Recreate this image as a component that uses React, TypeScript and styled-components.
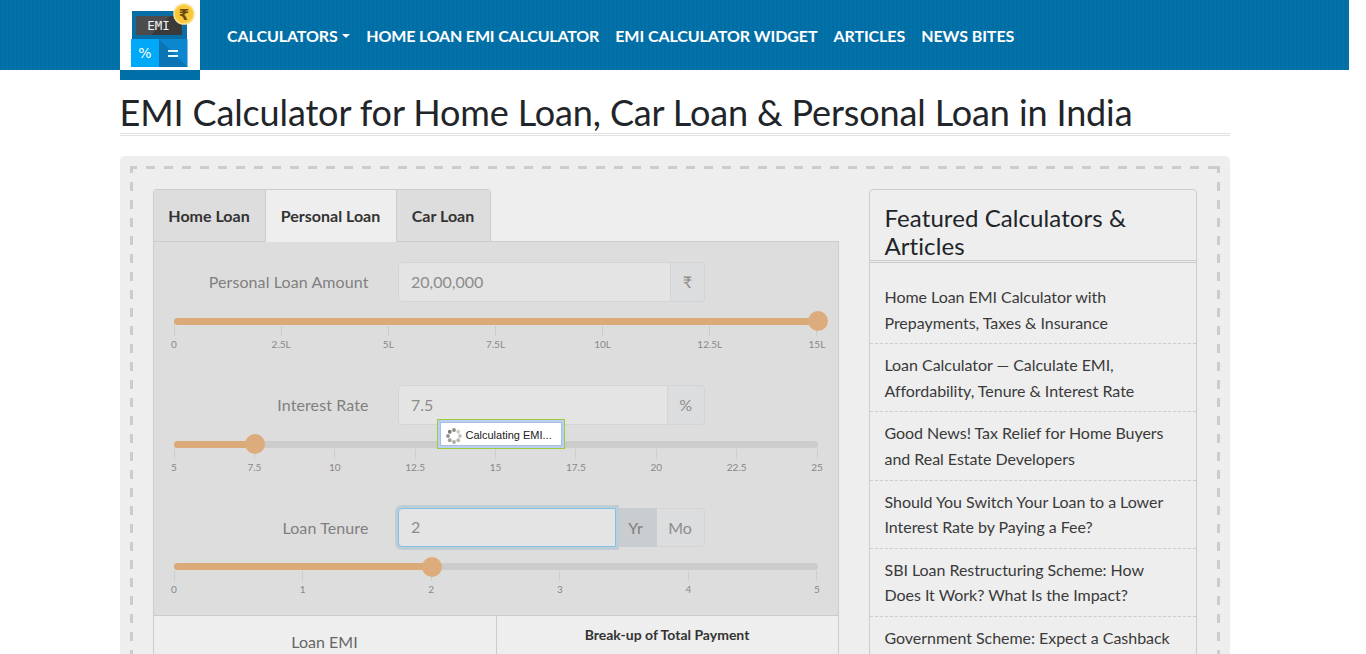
import React from "react";
import styled, { createGlobalStyle } from "styled-components";

const Global = createGlobalStyle`
  html, body { margin: 0; padding: 0; background: #fff; overflow: hidden; }
  * { box-sizing: border-box; }
  body { font-family: "Lato", "Liberation Sans", sans-serif; font-size: 16px; line-height: 1.6; color: #212529; }
`;

const Page = styled.div`
  width: 1349px;
  height: 654px;
  overflow: hidden;
`;
const Header = styled.header`
  height: 70px;
  background-color: #006fa8;
  background-image: repeating-linear-gradient(90deg, rgba(0,0,0,0.015) 0 2px, rgba(255,255,255,0.015) 2px 4px);
`;
const Container = styled.div`
  width: 1110px;
  margin: 0 auto;
`;
const HeaderInner = styled(Container)`
  display: flex;
  height: 70px;
`;
const LogoBox = styled.a`
  display: block;
  width: 80px;
  height: 80px;
  flex: none;
  background: linear-gradient(#fff 0 70px, #006fa8 70px);
`;
const Nav = styled.nav`
  display: flex;
  align-items: center;
  padding: 2px 0 0 19.5px;
`;
const NavLink = styled.a<{ $tight?: boolean }>`
  display: flex;
  align-items: center;
  padding: 0 8px;
  color: #fff;
  font-weight: 700;
  font-size: 16px;
  letter-spacing: ${(p) => (p.$tight ? "-0.17px" : "-0.07px")};
  text-transform: uppercase;
  white-space: nowrap;
`;
const Caret = styled.span`
  width: 0;
  height: 0;
  margin-left: 4.5px;
  border-top: 4.5px solid #fff;
  border-left: 4.5px solid transparent;
  border-right: 4.5px solid transparent;
`;
const Title = styled.h1`
  margin: 19px 0 20px;
  padding-bottom: 0;
  font-size: 36px;
  font-weight: 400;
  line-height: 46px;
  letter-spacing: -0.13px;
  color: #212529;
  border-bottom: 3px double #e2e2e2;
  height: 47px;
`;
const Panel = styled.section`
  background: #eee;
  border-radius: 5px;
  padding: 10px;
`;
const DashedFrame = styled.div`
  display: flex;
  gap: 30px;
  padding: 23px;
  background-image:
    linear-gradient(90deg, #ccc 9px, transparent 9px),
    linear-gradient(90deg, #ccc 9px, transparent 9px),
    linear-gradient(#ccc 9px, transparent 9px),
    linear-gradient(#ccc 9px, transparent 9px);
  background-size: 18px 3px, 18px 3px, 3px 18px, 3px 18px;
  background-position: -2px 0, -2px 100%, 0 -2px, 100% -2px;
  background-repeat: repeat-x, repeat-x, repeat-y, repeat-y;
`;
const Calculator = styled.div`
  width: 686px;
  flex: none;
`;
const Tabs = styled.div`
  display: flex;
  width: 338px;
  height: 53px;
  border: 1px solid #ccc;
  border-bottom: 0;
  border-radius: 4px 4px 0 0;
  position: relative;
  z-index: 1;
  margin-bottom: -1px;
`;
const Tab = styled.a<{ $active?: boolean; $width: number }>`
  display: flex;
  align-items: center;
  justify-content: center;
  width: ${(p) => p.$width}px;
  height: ${(p) => (p.$active ? "52px" : "51px")};
  font-weight: 700;
  font-size: 16px;
  color: #333;
  background: ${(p) => (p.$active ? "#eee" : "#ddd")};
  border-left: ${(p) => (p.$active ? "1px solid #ccc" : "0")};
  border-right: ${(p) => (p.$active ? "1px solid #ccc" : "0")};
`;
const TabPane = styled.div`
  background: #ddd;
  border: 1px solid #ccc;
  border-bottom: 0;
  position: relative;
`;
const Fields = styled.div`
  padding: 20.3px 20px 18.6px;
`;
const Row = styled.div`
  margin-bottom: 34px;
  &:last-child { margin-bottom: 0; }
`;
const FieldLine = styled.div`
  display: flex;
  align-items: center;
  height: 39.6px;
  margin-bottom: 16.1px;
`;
const FieldLabel = styled.label`
  width: 195px;
  margin-right: 29px;
  text-align: right;
  color: #808080;
  font-size: 16px;
  letter-spacing: 0.1px;
`;
const InputGroup = styled.div`
  display: flex;
  width: 307px;
  height: 39.6px;
`;
const FieldInput = styled.input<{ $focused?: boolean }>`
  flex: 1;
  min-width: 0;
  height: 100%;
  padding: 5.5px 12px 6.5px 12.5px;
  font: 400 16px "Lato", sans-serif;
  color: #8c8c8c;
  background: #e4e4e4;
  border: 1px solid ${(p) => (p.$focused ? "#80c2e6" : "#d2d4d6")};
  border-radius: 4px 0 0 4px;
  outline: none;
  position: relative;
  z-index: ${(p) => (p.$focused ? 2 : 0)};
  box-shadow: ${(p) => (p.$focused ? "0 0 0 3px #bfcdd5" : "none")};
`;
const Addon = styled.span<{ $active?: boolean; $last?: boolean }>`
  display: flex;
  align-items: center;
  justify-content: center;
  padding: 0 11.5px;
  color: ${(p) => (p.$active ? "#7e7e7e" : "#8c8c8c")};
  font-size: 16px;
  background: ${(p) => (p.$active ? "#c9cdd0" : "#dcdddf")};
  border: 1px solid ${(p) => (p.$active ? "#c9cdd0" : "#d2d4d6")};
  border-left: 0;
  border-radius: ${(p) => (p.$last ? "0 4px 4px 0" : "0")};
`;
const TenureAddon = styled(Addon)`
  padding: 0;
  width: ${(p) => (p.$last ? "48px" : "41px")};
`;
const Slider = styled.div`
  position: relative;
  height: 7px;
  background: #ccc;
  border-radius: 4px;
`;
const SliderFill = styled.div<{ $pct: number }>`
  height: 7px;
  width: ${(p) => p.$pct}%;
  background: #dbaa79;
  border-radius: 4px 0 0 4px;
`;
const Handle = styled.span<{ $pct: number }>`
  position: absolute;
  top: -6.5px;
  left: ${(p) => p.$pct}%;
  width: 20px;
  height: 20px;
  margin-left: -9.5px;
  border-radius: 50%;
  background: #dcac7c;
`;
const Scale = styled.div`
  display: flex;
  justify-content: space-between;
  height: 26px;
  padding-top: 1px;
`;
const Tick = styled.div`
  display: flex;
  flex-direction: column;
  align-items: center;
  width: 1px;
`;
const TickLine = styled.span`
  display: block;
  flex: none;
  width: 1px;
  height: 10px;
  background: #ccc;
`;
const TickLabel = styled.span`
  font-size: 10px;
  line-height: 16px;
  color: #888;
  white-space: nowrap;
`;
const Results = styled.div`
  display: grid;
  grid-template-columns: 342px 1fr;
  background: #eee;
  border-top: 1px solid #ccc;
  height: 120px;
`;
const ResultCell = styled.div`
  padding-top: 13px;
  text-align: center;
  color: #666;
  font-size: 16px;
  & + & { border-left: 1px solid #ccc; }
`;
const BreakupHead = styled.div`
  margin-top: -5px;
  text-align: center;
  font-size: 14px;
  font-weight: 700;
  color: #333;
`;
const Loader = styled.div`
  position: absolute;
  left: 283px;
  top: 177px;
  width: 128px;
  height: 30px;
  border: 1px solid #9ccc3c;
  background: #fff;
  box-shadow: inset 0 0 0 2px #b9d0f0, inset 0 0 0 3px #a8bde0;
  display: flex;
  align-items: center;
  padding: 3px 0 0 8px;
  gap: 4px;
  z-index: 3;
  font-family: "Liberation Sans", sans-serif;
  font-size: 11px;
  color: #222;
  white-space: nowrap;
`;
const Sidebar = styled.aside`
  width: 328px;
  flex: none;
  height: 600px;
  border: 1px solid #ccc;
  border-radius: 4px;
`;
const SideHead = styled.h3`
  margin: 0;
  padding: 13.5px 15px 0;
  height: 73px;
  font-size: 24px;
  font-weight: 400;
  line-height: 28.8px;
  letter-spacing: 0.08px;
  color: #212529;
  border-bottom: 3px double #ccc;
`;
const SideList = styled.ul`
  list-style: none;
  margin: 0;
  padding: 13px 0 0;
`;
const SideItem = styled.li`
  padding: 8px 15px;
  font-size: 16px;
  line-height: 25.6px;
  letter-spacing: -0.04px;
  color: #3a3a3a;
  border-bottom: 1px dashed #ccc;
`;

const Logo = () => (
  <svg width="80" height="70" viewBox="0 0 80 70" style={{ display: "block" }}>
    <rect x="12" y="11" width="55" height="29" fill="#0a6ea6" />
    <rect x="16" y="16" width="46" height="19" fill="#3a3a3a" />
    <path d="M16 16H50L31 35H16Z" fill="#4c4c4c" />
    <text x="38.5" y="29.5" textAnchor="middle" fill="#f2f2f2" fontFamily="DejaVu Sans Mono, monospace" fontSize="12.5">EMI</text>
    <rect x="11" y="39" width="28" height="28" fill="#00a9f7" />
    <rect x="39" y="39" width="28.5" height="28" fill="#0c86cf" />
    <path d="M39 39L67.5 67H39Z" fill="#0a74b4" />
    <text x="25" y="58" textAnchor="middle" fill="#fff" fontFamily="DejaVu Sans, sans-serif" fontSize="14">%</text>
    <rect x="48" y="50" width="10" height="2" fill="#e8f6ff" />
    <rect x="48" y="55" width="10" height="2" fill="#e8f6ff" />
    <circle cx="64" cy="14" r="10.8" fill="#fce39a" />
    <circle cx="64" cy="14" r="9.3" fill="#f9c93a" />
    <text x="64" y="19.5" textAnchor="middle" fill="#6b4a10" fontFamily="DejaVu Sans, sans-serif" fontWeight="700" fontSize="15">₹</text>
  </svg>
);

const Spinner = () => {
  const shades = ["#8d8d80", "#cfcfc4", "#c4c4b8", "#b8b8ac", "#acaca0", "#a0a094", "#949488", "#7d7d70"];
  return (
    <svg width="16" height="16" viewBox="0 0 16 16">
      {shades.map((c, i) => {
        const a = (i * Math.PI) / 4 - Math.PI / 2;
        return <circle key={i} cx={8 + 6 * Math.cos(a)} cy={8 + 6 * Math.sin(a)} r="1.9" fill={c} />;
      })}
    </svg>
  );
};

const Ticks = ({ labels }: { labels: string[] }) => (
  <Scale>
    {labels.map((l) => (
      <Tick key={l}>
        <TickLine />
        <TickLabel>{l}</TickLabel>
      </Tick>
    ))}
  </Scale>
);

const items = [
  "Home Loan EMI Calculator with Prepayments, Taxes & Insurance",
  "Loan Calculator — Calculate EMI, Affordability, Tenure & Interest Rate",
  "Good News! Tax Relief for Home Buyers and Real Estate Developers",
  "Should You Switch Your Loan to a Lower Interest Rate by Paying a Fee?",
  "SBI Loan Restructuring Scheme: How Does It Work? What Is the Impact?",
  "Government Scheme: Expect a Cashback",
];

export default function App() {
  return (
    <Page>
      <Global />
      <Header>
        <HeaderInner>
          <LogoBox><Logo /></LogoBox>
          <Nav>
            <NavLink>Calculators<Caret /></NavLink>
            <NavLink $tight>Home Loan EMI Calculator</NavLink>
            <NavLink>EMI Calculator Widget</NavLink>
            <NavLink>Articles</NavLink>
            <NavLink>News Bites</NavLink>
          </Nav>
        </HeaderInner>
      </Header>
      <Container>
        <Title>EMI Calculator for Home Loan, Car Loan &amp; Personal Loan in India</Title>
        <Panel>
          <DashedFrame>
            <Calculator>
              <Tabs>
                <Tab $width={111}>Home Loan</Tab>
                <Tab $active $width={132}>Personal Loan</Tab>
                <Tab $width={93}>Car Loan</Tab>
              </Tabs>
              <TabPane>
                <Fields>
                  <Row>
                    <FieldLine>
                      <FieldLabel>Personal Loan Amount</FieldLabel>
                      <InputGroup>
                        <FieldInput readOnly value="20,00,000" />
                        <Addon $last>₹</Addon>
                      </InputGroup>
                    </FieldLine>
                    <Slider><SliderFill $pct={100} /><Handle $pct={100} /></Slider>
                    <Ticks labels={["0", "2.5L", "5L", "7.5L", "10L", "12.5L", "15L"]} />
                  </Row>
                  <Row>
                    <FieldLine>
                      <FieldLabel>Interest Rate</FieldLabel>
                      <InputGroup>
                        <FieldInput readOnly value="7.5" />
                        <Addon $last>%</Addon>
                      </InputGroup>
                    </FieldLine>
                    <Slider><SliderFill $pct={12.5} /><Handle $pct={12.5} /></Slider>
                    <Ticks labels={["5", "7.5", "10", "12.5", "15", "17.5", "20", "22.5", "25"]} />
                  </Row>
                  <Row>
                    <FieldLine>
                      <FieldLabel>Loan Tenure</FieldLabel>
                      <InputGroup>
                        <FieldInput readOnly value="2" $focused />
                        <TenureAddon $active>Yr</TenureAddon>
                        <TenureAddon $last>Mo</TenureAddon>
                      </InputGroup>
                    </FieldLine>
                    <Slider><SliderFill $pct={40} /><Handle $pct={40} /></Slider>
                    <Ticks labels={["0", "1", "2", "3", "4", "5"]} />
                  </Row>
                </Fields>
                <Loader><Spinner />Calculating EMI...</Loader>
                <Results>
                  <ResultCell>Loan EMI</ResultCell>
                  <ResultCell><BreakupHead>Break-up of Total Payment</BreakupHead></ResultCell>
                </Results>
              </TabPane>
            </Calculator>
            <Sidebar>
              <SideHead>Featured Calculators &amp; Articles</SideHead>
              <SideList>
                {items.map((t) => <SideItem key={t}>{t}</SideItem>)}
              </SideList>
            </Sidebar>
          </DashedFrame>
        </Panel>
      </Container>
    </Page>
  );
}
